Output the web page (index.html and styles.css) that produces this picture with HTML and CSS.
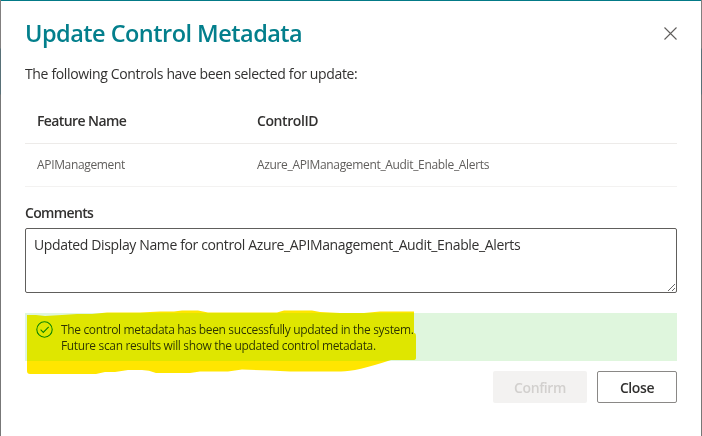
FILE: index.html
```html
<!DOCTYPE html>
<html lang="en">
<head>
<meta charset="utf-8">
<title>Update Control Metadata</title>
<link rel="stylesheet" href="styles.css">
</head>
<body>
<main class="dialog" role="dialog" aria-labelledby="title">
  <header class="dialog-header">
    <h1 class="title" id="title">Update Control Metadata</h1>
    <button class="dismiss" aria-label="Close dialog">
      <svg width="13" height="13" viewBox="0 0 13 13"><path d="M.5 .5l12 12M12.5 .5l-12 12"/></svg>
    </button>
  </header>
  <p class="intro">The following Controls have been selected for update:</p>
  <div class="table">
    <div class="row head"><span class="feature-head">Feature Name</span><span>ControlID</span></div>
    <div class="row"><span>APIManagement</span><span>Azure_APIManagement_Audit_Enable_Alerts</span></div>
  </div>
  <label class="label" for="comments">Comments</label>
  <textarea class="comments" id="comments" spellcheck="false">Updated Display Name for control Azure_APIManagement_Audit_Enable_Alerts</textarea>
  <section class="message">
    <svg class="check" width="17" height="17" viewBox="0 0 17 17"><circle cx="8.5" cy="8.5" r="7.7"/><path d="M4.6 8.7l2.7 2.7 5.4-5.5"/></svg>
    <p class="message-text">The control metadata has been successfully updated in the system.<br>Future scan results will show the updated control metadata.</p>
    <svg class="marker" width="390" height="66" viewBox="27 309 390 66"><path d="M27 315 L36 315 45 316 62 315 77 314 92 314 107 312.5 140 312.5 160 311.5 174 311.5 182 310.5 198 310.5 208 312.5 277 312.5 284 310.5 312 310.5 320 312 340 313 364 313 380 311.5 414 311.5 414 333 Q416 333 416 336 L416 358 Q416 360 413 360 L391 360 Q356 371.500 341 371.500 L290 371.500 270 370.500 242 369.500 228 371.500 200 371.500 190 373 156 373 Q149 370 142 370 L128 370 115 372 105 372 96 374 30 374 Q27 374 27 371Z"/></svg>
  </section>
  <footer class="actions">
    <button class="button confirm" disabled>Confirm</button>
    <button class="button close">Close</button>
  </footer>
</main>
</body>
</html>
```

FILE: styles.css
```css
* { box-sizing: border-box; }
body {
  margin: 0;
  background: linear-gradient(#817f7f 0 48px, #587077 49px 94px, #777 95px);
  color: #323130;
  font-family: "Open Sans", "Noto Sans", sans-serif;
  font-size: 14px;
}
p, h1 { margin: 0; }
button { font-family: inherit; padding: 0; }
.dialog {
  height: 436px;
  margin: 0 1px;
  padding: 0 24px;
  background: #fff;
  border-top: 1px solid #037a87;
}
.dialog-header {
  display: flex;
  justify-content: space-between;
  height: 63px;
  padding-top: 16px;
}
.title {
  color: #037f8c;
  font-size: 23.5px;
  font-weight: 600;
  line-height: 32px;
  letter-spacing: -.52px;
}
.dismiss {
  width: 13px;
  height: 13px;
  margin-top: 10px;
  border: 0;
  background: none;
  line-height: 0;
}
.dismiss path { stroke: #605e5c; stroke-width: 1.1; }
.intro { height: 36px; line-height: 20px; letter-spacing: -.35px; }
.table { height: 87px; }
.row {
  display: grid;
  grid-template-columns: 220px 1fr;
  height: 43px;
  padding: 0 12px;
  border-bottom: 1px solid #f3f2f1;
  color: #605e5c;
  font-size: 12px;
  line-height: 42px;
  letter-spacing: -.34px;
}
.row.head {
  height: 44px;
  border-color: #edebe9;
  color: #323130;
  font-size: 14px;
  font-weight: 600;
  letter-spacing: -.42px;
}
.row .feature-head { letter-spacing: -.6px; }
.label {
  display: block;
  height: 41px;
  padding-top: 16px;
  font-weight: 600;
  line-height: 20px;
  letter-spacing: -.65px;
}
.comments {
  display: block;
  width: 652px;
  height: 65px;
  padding: 6px 8px;
  border: 1px solid #605e5c;
  border-radius: 2px;
  outline: 0;
  background: #fff;
  color: #323130;
  font: inherit;
  line-height: 19px;
  letter-spacing: -.365px;
}
.message {
  position: relative;
  display: flex;
  height: 48px;
  margin-top: 20px;
  padding: 8px 11px;
  background: #dff6dd;
  font-size: 12px;
  line-height: 16px;
}
.check { margin-right: 8px; fill: none; stroke: #107c10; stroke-width: 1.1; }
.message-text { padding-top: 1px; letter-spacing: -.345px; }
.marker {
  position: absolute;
  left: 2px;
  top: -4px;
  fill: #ffe600;
  mix-blend-mode: darken;
}
.actions {
  display: flex;
  justify-content: flex-end;
  gap: 10px;
  margin-top: 10px;
}
.button {
  height: 32px;
  border-radius: 2px;
  font-size: 14px;
  font-weight: 600;
  letter-spacing: -.4px;
}
.confirm { width: 94px; border: 0; background: #f3f2f1; color: #d2d0ce; }
.close { width: 80px; border: 1px solid #8a8886; background: #fff; color: #323130; }
```
